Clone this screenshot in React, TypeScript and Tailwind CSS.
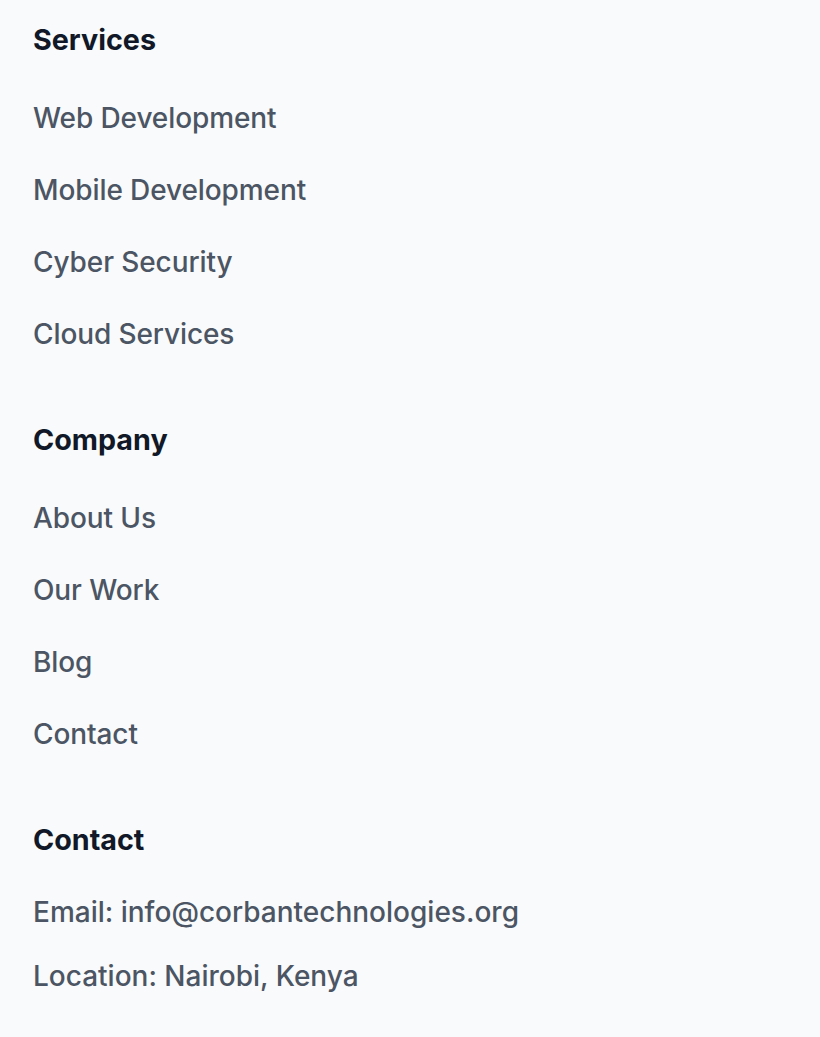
const services = ["Web Development", "Mobile Development", "Cyber Security", "Cloud Services"]
const company = ["About Us", "Our Work", "Blog", "Contact"]

const LinkList: React.FC<{ title: string; items: string[] }> = ({ title, items }) => {
    return (
        <div className="flex flex-col">
            <h3 className="text-[28.7px] leading-[40px] font-bold text-[#111827]">{title}</h3>
            <ul className="flex flex-col gap-[32px] mt-[38px]">
                {items.map((item) => (
                    <li key={item}>
                        <a href="#" className="text-[28px] leading-[40px] font-medium tracking-[-0.1px] text-[#4b5563]">{item}</a>
                    </li>
                ))}
            </ul>
        </div>
    )
}

export default function App() {
    return (
        <footer
            className="min-h-[1037px] w-full bg-[#f9fafb] px-[33px] pt-[20px] flex flex-col gap-[66px]"
            style={{ fontFamily: "Inter, 'Noto Sans', sans-serif" }}
        >
            <LinkList title="Services" items={services} />
            <LinkList title="Company" items={company} />
            <div className="flex flex-col">
                <h3 className="text-[28.7px] leading-[40px] font-bold text-[#111827]">Contact</h3>
                <div className="flex flex-col gap-[24px] mt-[32px] text-[28px] leading-[40px] font-medium text-[#4b5563]">
                    <p>Email: info@corbantechnologies.org</p>
                    <p>Location: Nairobi, Kenya</p>
                </div>
            </div>
        </footer>
    )
}
